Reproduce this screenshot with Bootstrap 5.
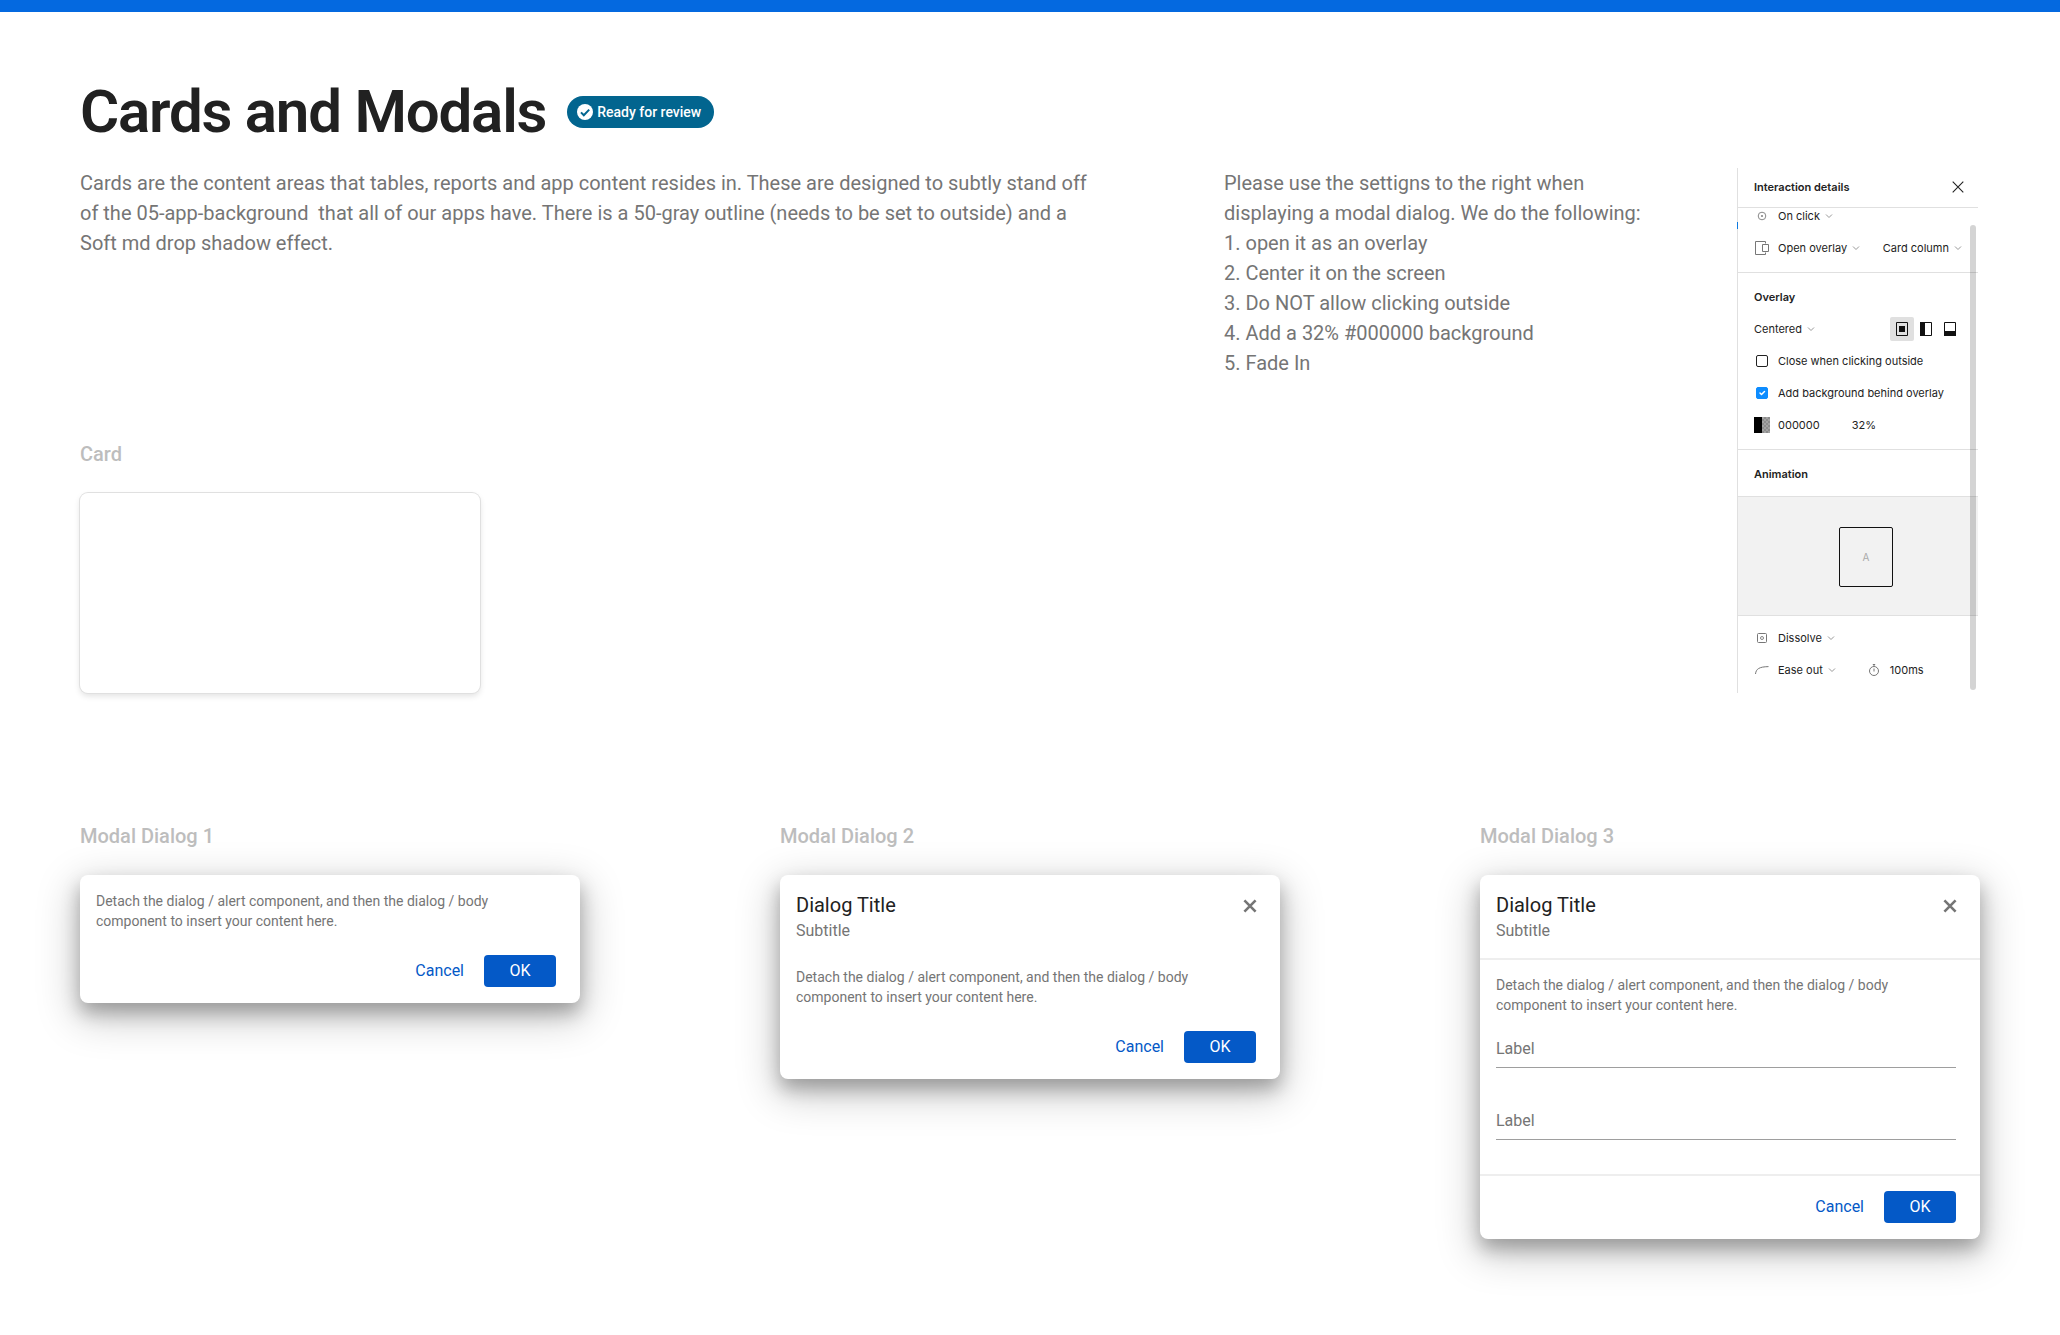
<!DOCTYPE html>
<html lang="en">
<head>
<meta charset="utf-8">
<meta name="viewport" content="width=device-width, initial-scale=1">
<title>Cards and Modals</title>
<link rel="stylesheet" href="https://cdn.jsdelivr.net/npm/bootstrap@5.3.0/dist/css/bootstrap.min.css">
<style>
  body { font-family: Roboto, "Liberation Sans", sans-serif; color: #212121; background: #fff; border-top: 12px solid #0469e0; }
  .sheet { padding: 64px 80px 96px; }
  .sheet-head { column-gap: 21px; }
  .sheet-title { font-size: 60px; line-height: 72px; font-weight: 600; letter-spacing: -0.02em; }
  .status-pill { height: 32px; padding: 0 13px 0 10px; gap: 4px; border-radius: 16px; background: #02658f; color: #fff; font-size: 14px; line-height: 20px; font-weight: 500; }
  .guide-text { font-size: 20px; line-height: 30px; color: #757575; }
  .intro-col { flex: 0 1 1020px; }
  .intro { min-height: 271px; }
  .steps { flex: 0 1 440px; margin-left: 124px; }
  .section-label { font-size: 20px; line-height: 30px; font-weight: 500; color: #bdbdbd; margin-bottom: 24px; }
  .overview { margin-top: 20px; margin-bottom: 128px; }
  .plain-card { width: 400px; max-width: 100%; height: 200px; border-radius: 8px; border: 0; background: #fff; box-shadow: 0 0 0 1px #e0e0e0, 0 3px 6px rgba(0,0,0,.12); }

  .dialog-col { flex: 0 1 500px; }
  .dialog-box { border-radius: 8px; background: #fff; box-shadow: 0 12px 40px 4px rgba(0,0,0,.22), 0 10px 18px rgba(0,0,0,.26); font-size: 14px; line-height: 20px; color: #757575; }
  .dialog-head { padding: 16px 23px 8px 16px; }
  .dialog-name { font-size: 20px; line-height: 28px; font-weight: 400; color: #212121; }
  .dialog-sub { font-size: 16px; line-height: 24px; }
  .dialog-content { padding: 16px 24px 0 16px; }
  .dialog-actions { padding: 24px 24px 16px; gap: 12px; }
  .dialog-actions .btn { height: 32px; padding: 0; border: 0; border-radius: 4px; font-size: 16px; line-height: 24px; }
  .dialog-actions .btn-ok { width: 72px; background: #0459c7; color: #fff; }
  .dialog-actions .btn-cancel { padding: 0 8px; color: #0459c7; }
  .icon-btn { border: 0; padding: 0; background: none; display: flex; color: #757575; }
  .ruled .dialog-head { padding-bottom: 15px; border-bottom: 2px solid #eee; }
  .ruled .dialog-content { padding-top: 15px; padding-bottom: 34px; }
  .ruled .dialog-actions { padding-top: 15px; border-top: 2px solid #eee; }
  .line-fields { margin-top: 13px; gap: 32px; }
  .line-fields .form-control, .line-fields .form-control:focus { height: 40px; min-height: 0; padding: 8px 0 7px; border: 0; border-bottom: 1px solid #9e9e9e; border-radius: 0; background: none; box-shadow: none; font-size: 16px; line-height: 24px; }
  .line-fields label { padding: 9px 0 6px; height: 40px; border: 0; font-size: 16px; line-height: 24px; color: #757575; }

  .inspector { width: 241px; margin-left: auto; margin-right: 2px; font-family: Inter, "Liberation Sans", sans-serif; font-size: 11px; line-height: 16px; color: #222; border-left: 1px solid #e0e0e0; position: relative; }
  .inspector h3 { font-size: 11px; line-height: 16px; font-weight: 600; margin: 0; }
  .insp-bar { height: 40px; padding: 0 14px 2px 16px; border-bottom: 1px solid #e0e0e0; }
  .insp-part { padding: 8px 16px; border-bottom: 1px solid #e0e0e0; }
  .insp-part.first-part { padding-top: 0; }
  .insp-part.slim-part { padding-bottom: 6px; }
  .insp-part.last-part { padding-top: 6px; padding-bottom: 7px; border: 0; }
  .insp-row { height: 32px; display: flex; align-items: center; }
  .insp-row.cut { height: 16px; margin-bottom: 8px; }
  .insp-mark { width: 16px; height: 16px; margin-right: 8px; display: flex; align-items: center; justify-content: center; flex: none; }
  .insp-mark.timer { margin-left: 30px; }
  .insp-mark svg, .pick svg, .icon-btn svg { display: block; }
  .pick { border: 0; padding: 0; background: none; color: inherit; display: flex; align-items: center; gap: 5px; white-space: nowrap; }
  .place { border: 0; padding: 0; width: 24px; height: 24px; background: none; display: flex; align-items: center; justify-content: center; border-radius: 2px; }
  .place.active { background: #e0e0e0; }
  .insp-mark .form-check-input { width: 12px; height: 12px; margin: 0; border: 1px solid #222; border-radius: 2px; }
  .insp-mark .form-check-input:checked { border-color: #0d8cff; background-color: #0d8cff; }
  .preview { height: 119px; background: #f2f2f2; border-bottom: 1px solid #e0e0e0; padding-left: 16px; padding-top: 2px; }
  .preview-frame { width: 54px; height: 60px; border: 1px solid #111; border-radius: 2px; color: #aaa; font-size: 10px; }
  .insp-scroll { position: absolute; right: 2px; top: 57px; bottom: 3px; width: 6px; border-radius: 3px; background: rgba(0,0,0,.17); }
  .insp-tick { position: absolute; left: -1px; top: 54px; width: 1px; height: 7px; background: #0d7ae0; }
</style>
<script src="https://cdn.jsdelivr.net/npm/bootstrap@5.3.0/dist/js/bootstrap.bundle.min.js" defer></script>
</head>
<body>
<svg class="d-none" aria-hidden="true">
  <symbol id="chev" viewBox="0 0 8 8"><path d="M1 2.5l3 3 3-3" fill="none" stroke="#999"/></symbol>
  <symbol id="cross" viewBox="0 0 14 14"><path d="M1.400 1.400l11.200 11.200M12.600 1.400L1.400 12.600" fill="none" stroke="currentColor" stroke-width="2.6"/></symbol>
</svg>
<main class="sheet">
  <header class="sheet-head d-flex align-items-center flex-wrap">
    <h1 class="sheet-title mb-0">Cards and Modals</h1>
    <span class="status-pill d-inline-flex align-items-center">
      <svg width="16" height="16" viewBox="0 0 16 16" aria-hidden="true"><circle cx="8" cy="8" r="8" fill="#fff"/><path d="M4 8.4l2.8 2.8L12.2 5.6" fill="none" stroke="#02658f" stroke-width="2"/></svg>
      Ready for review
    </span>
  </header>

  <section class="overview d-flex align-items-start">
    <div class="intro-col">
      <p class="guide-text intro mb-0">Cards are the content areas that tables, reports and app content resides in. These are designed to subtly stand off of the 05-app-background&nbsp; that all of our apps have. There is a 50-gray outline (needs to be set to outside) and a Soft md drop shadow effect.</p>
      <h2 class="section-label">Card</h2>
      <div class="plain-card"></div>
    </div>
    <div class="guide-text steps">
      Please use the settigns to the right when displaying a modal dialog. We do the following:
      <ol class="list-unstyled mb-0">
        <li>1. open it as an overlay</li>
        <li>2. Center it on the screen</li>
        <li>3. Do NOT allow clicking outside</li>
        <li>4. Add a 32% #000000 background</li>
        <li>5. Fade In</li>
      </ol>
    </div>
    <aside class="inspector flex-shrink-0">
      <div class="insp-bar d-flex align-items-center justify-content-between">
        <h3>Interaction details</h3>
        <button class="icon-btn" type="button" aria-label="Close details"><svg width="12" height="12" viewBox="0 0 12 12"><path d="M.7.7l10.6 10.6M11.3.7L.7 11.3" fill="none" stroke="#222" stroke-width="1.1"/></svg></button>
      </div>
      <div class="insp-part first-part">
        <div class="insp-row cut">
          <span class="insp-mark"><svg width="10" height="10" viewBox="0 0 10 10"><circle cx="5" cy="5" r="3.8" fill="none" stroke="#888"/><circle cx="5" cy="5" r="1.1" fill="#888"/></svg></span>
          <button class="pick" type="button">On click <svg width="8" height="8"><use href="#chev"/></svg></button>
        </div>
        <div class="insp-row">
          <span class="insp-mark"><svg width="16" height="16" viewBox="0 0 16 16"><path d="M11.500 3.500V1.500H1.500v13h10v-2M8.500 4.500h6v7h-6z" fill="none" stroke="#777"/></svg></span>
          <button class="pick" type="button">Open overlay <svg width="8" height="8"><use href="#chev"/></svg></button>
          <button class="pick ms-auto" type="button">Card column <svg width="8" height="8"><use href="#chev"/></svg></button>
        </div>
      </div>
      <div class="insp-part">
        <div class="insp-row"><h3>Overlay</h3></div>
        <div class="insp-row">
          <button class="pick" type="button">Centered <svg width="8" height="8"><use href="#chev"/></svg></button>
          <button class="place active ms-auto" type="button" aria-label="Center"><svg width="12" height="14" viewBox="0 0 12 14"><path d="M.5.5h11v13H.5z" fill="none" stroke="#111"/><path d="M3 4h6v6H3z" fill="#111"/></svg></button>
          <button class="place" type="button" aria-label="Left"><svg width="12" height="14" viewBox="0 0 12 14"><path d="M.5.5h11v13H.5z" fill="none" stroke="#111"/><path d="M0 0h5v14H0z" fill="#111"/></svg></button>
          <button class="place" type="button" aria-label="Bottom"><svg width="12" height="14" viewBox="0 0 12 14"><path d="M.5.5h11v13H.5z" fill="none" stroke="#111"/><path d="M0 9h12v5H0z" fill="#111"/></svg></button>
        </div>
        <div class="insp-row"><span class="insp-mark"><input class="form-check-input" type="checkbox" id="close-outside"></span><label for="close-outside">Close when clicking outside</label></div>
        <div class="insp-row"><span class="insp-mark"><input class="form-check-input" type="checkbox" id="add-backdrop" checked></span><label for="add-backdrop">Add background behind overlay</label></div>
        <div class="insp-row">
          <span class="insp-mark"><svg width="16" height="16" viewBox="0 0 16 16"><path d="M0 0h16v16H0z" fill="#a3a3a3"/><path d="M8 2h2v2H8zM12 2h2v2h-2zM10 4h2v2h-2zM14 4h2v2h-2zM8 6h2v2H8zM12 6h2v2h-2zM10 8h2v2h-2zM14 8h2v2h-2zM8 10h2v2H8zM12 10h2v2h-2zM10 12h2v2h-2zM14 12h2v2h-2zM10 0h2v2h-2zM14 0h2v2h-2zM8 14h2v2H8zM12 14h2v2h-2z" fill="#8c8c8c"/><path d="M0 0h8v16H0z"/></svg></span>
          <span>000000</span><span class="ms-4 ps-2">32%</span>
        </div>
      </div>
      <div class="insp-part slim-part"><div class="insp-row"><h3>Animation</h3></div></div>
      <div class="preview d-flex align-items-center justify-content-center"><div class="preview-frame d-flex align-items-center justify-content-center">A</div></div>
      <div class="insp-part last-part">
        <div class="insp-row">
          <span class="insp-mark"><svg width="10" height="10" viewBox="0 0 10 10"><rect x=".5" y=".5" width="9" height="9" rx="1" fill="none" stroke="#777"/><circle cx="5" cy="5" r="1.500" fill="none" stroke="#777" stroke-width=".9"/></svg></span>
          <button class="pick" type="button">Dissolve <svg width="8" height="8"><use href="#chev"/></svg></button>
        </div>
        <div class="insp-row">
          <span class="insp-mark"><svg width="14" height="8" viewBox="0 0 14 8"><path d="M.5 8C1 3 4 .8 13.500.6" fill="none" stroke="#777"/></svg></span>
          <button class="pick" type="button">Ease out <svg width="8" height="8"><use href="#chev"/></svg></button>
          <span class="insp-mark timer"><svg width="12" height="12" viewBox="0 0 12 12"><circle cx="6" cy="7" r="4.500" fill="none" stroke="#777"/><path d="M6 4.500v3M4.800.5h2.400M6 .5v2" fill="none" stroke="#777"/></svg></span>
          <span>100ms</span>
        </div>
      </div>
      <span class="insp-scroll"></span><span class="insp-tick"></span>
    </aside>
  </section>

  <section class="d-flex justify-content-between align-items-start">
    <div class="dialog-col">
      <h2 class="section-label">Modal Dialog 1</h2>
      <div class="dialog-box">
        <div class="dialog-content">Detach the dialog / alert component, and then the dialog / body component to insert your content here.</div>
        <div class="dialog-actions d-flex justify-content-end">
          <button class="btn btn-cancel" type="button">Cancel</button><button class="btn btn-ok" type="button">OK</button>
        </div>
      </div>
    </div>
    <div class="dialog-col">
      <h2 class="section-label">Modal Dialog 2</h2>
      <div class="dialog-box">
        <div class="dialog-head d-flex justify-content-between align-items-start">
          <div><h3 class="dialog-name mb-0">Dialog Title</h3><div class="dialog-sub">Subtitle</div></div>
          <button class="icon-btn py-2" type="button" aria-label="Close"><svg width="14" height="14"><use href="#cross"/></svg></button>
        </div>
        <div class="dialog-content">Detach the dialog / alert component, and then the dialog / body component to insert your content here.</div>
        <div class="dialog-actions d-flex justify-content-end">
          <button class="btn btn-cancel" type="button">Cancel</button><button class="btn btn-ok" type="button">OK</button>
        </div>
      </div>
    </div>
    <div class="dialog-col">
      <h2 class="section-label">Modal Dialog 3</h2>
      <div class="dialog-box ruled">
        <div class="dialog-head d-flex justify-content-between align-items-start">
          <div><h3 class="dialog-name mb-0">Dialog Title</h3><div class="dialog-sub">Subtitle</div></div>
          <button class="icon-btn py-2" type="button" aria-label="Close"><svg width="14" height="14"><use href="#cross"/></svg></button>
        </div>
        <div class="dialog-content">
          Detach the dialog / alert component, and then the dialog / body component to insert your content here.
          <div class="line-fields d-flex flex-column">
            <div class="form-floating"><input class="form-control" id="field-a" type="text" placeholder=" "><label for="field-a">Label</label></div>
            <div class="form-floating"><input class="form-control" id="field-b" type="text" placeholder=" "><label for="field-b">Label</label></div>
          </div>
        </div>
        <div class="dialog-actions d-flex justify-content-end">
          <button class="btn btn-cancel" type="button">Cancel</button><button class="btn btn-ok" type="button">OK</button>
        </div>
      </div>
    </div>
  </section>
</main>
</body>
</html>
